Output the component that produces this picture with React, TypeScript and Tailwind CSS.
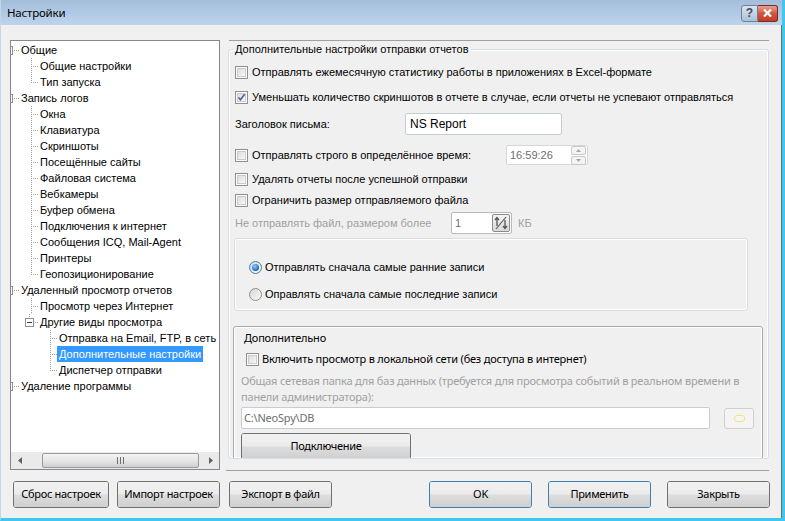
import React from "react";

type Row = {
  label: string;
  level: 0 | 1 | 2;
  last?: boolean;
  box?: boolean;
  selected?: boolean;
};

const rows: Row[] = [
  { label: "Общие", level: 0 },
  { label: "Общие настройки", level: 1 },
  { label: "Тип запуска", level: 1, last: true },
  { label: "Запись логов", level: 0 },
  { label: "Окна", level: 1 },
  { label: "Клавиатура", level: 1 },
  { label: "Скриншоты", level: 1 },
  { label: "Посещённые сайты", level: 1 },
  { label: "Файловая система", level: 1 },
  { label: "Вебкамеры", level: 1 },
  { label: "Буфер обмена", level: 1 },
  { label: "Подключения к интернет", level: 1 },
  { label: "Сообщения ICQ, Mail-Agent", level: 1 },
  { label: "Принтеры", level: 1 },
  { label: "Геопозиционирование", level: 1, last: true },
  { label: "Удаленный просмотр отчетов", level: 0 },
  { label: "Просмотр через Интернет", level: 1 },
  { label: "Другие виды просмотра", level: 1, last: true, box: true },
  { label: "Отправка на Email, FTP, в сеть", level: 2 },
  { label: "Дополнительные настройки", level: 2, selected: true },
  { label: "Диспетчер отправки", level: 2, last: true },
  { label: "Удаление программы", level: 0, last: true },
];

const gutterWidth = { 0: 8, 1: 27, 2: 46 };

function Connector({ row }: { row: Row }) {
  const w = gutterWidth[row.level];
  const dot = { stroke: "#a0a0a0", strokeDasharray: "1 1", shapeRendering: "crispEdges" as const };
  return (
    <svg width={w} height={16} className="shrink-0">
      {row.level === 0 && (
        <>
          <path d="M0 4.5H1.5V12.5H0" fill="none" stroke="#919191" shapeRendering="crispEdges" />
          <line x1={3} y1={8.5} x2={8} y2={8.5} {...dot} />
        </>
      )}
      {row.level === 1 && !row.box && (
        <>
          <line x1={20.5} y1={0} x2={20.5} y2={row.last ? 9 : 16} {...dot} />
          <line x1={22} y1={8.5} x2={27} y2={8.5} {...dot} />
        </>
      )}
      {row.level === 1 && row.box && (
        <>
          <line x1={18.5} y1={0} x2={18.5} y2={4} {...dot} />
          <rect x={14.5} y={4.5} width={8} height={8} fill="#fff" stroke="#919191" shapeRendering="crispEdges" />
          <line x1={16} y1={8.5} x2={21} y2={8.5} stroke="#3c3c3c" shapeRendering="crispEdges" />
          <line x1={24} y1={8.5} x2={27} y2={8.5} {...dot} />
          <line x1={39.5} y1={12} x2={39.5} y2={16} {...dot} />
        </>
      )}
      {row.level === 2 && (
        <>
          <line x1={39.5} y1={0} x2={39.5} y2={row.last ? 9 : 16} {...dot} />
          <line x1={41} y1={8.5} x2={46} y2={8.5} {...dot} />
        </>
      )}
    </svg>
  );
}

function TreeRow({ row }: { row: Row }) {
  return (
    <div className="flex h-[16px] items-center whitespace-nowrap">
      <Connector row={row} />
      <span
        className={
          "flex h-[16px] items-center px-[2px] " +
          (row.selected ? "bg-[#3399ff] text-white" : "text-black")
        }
      >
        {row.label}
      </span>
    </div>
  );
}

function HScrollbar() {
  return (
    <div className="flex h-[17px] items-center bg-[#eaeaea] px-[1px]">
      <div className="flex h-[15px] w-[15px] items-center justify-center">
        <svg width="4" height="7" viewBox="0 0 4 7">
          <path d="M4 0V7L0 3.5Z" fill="#606060" />
        </svg>
      </div>
      <div className="ml-[15px] flex h-[15px] w-[157px] items-center justify-center rounded-[2px] border border-[#9a9a9a] bg-gradient-to-b from-[#f3f3f3] via-[#e6e6e6] to-[#d0d0d0]">
        <svg width="8" height="7" viewBox="0 0 8 7">
          <path d="M0.5 0V7M3.5 0V7M6.5 0V7" stroke="#6e6e6e" strokeWidth="1" />
        </svg>
      </div>
      <div className="flex-1" />
      <div className="flex h-[15px] w-[15px] items-center justify-center">
        <svg width="4" height="7" viewBox="0 0 4 7">
          <path d="M0 0V7L4 3.5Z" fill="#606060" />
        </svg>
      </div>
    </div>
  );
}

function Checkbox({ checked, className = "" }: { checked?: boolean; className?: string }) {
  return (
    <div className={"flex h-[13px] w-[13px] shrink-0 items-center justify-center border border-[#8e8f8f] bg-white " + className}>
      <div className="relative h-[9px] w-[9px] border border-[#cbcbcb] bg-gradient-to-br from-[#dcdcdc] to-[#f9f9f9]">
        {checked && (
          <svg width="9" height="9" viewBox="0 0 9 9" className="absolute left-[-1px] top-[-1px]">
            <path d="M1.5 4.5L3.5 6.8L7.6 1.2" fill="none" stroke="#4a5f97" strokeWidth="1.6" />
          </svg>
        )}
      </div>
    </div>
  );
}

function Radio({ checked }: { checked?: boolean }) {
  return (
    <div
      className={
        "flex h-[13px] w-[13px] shrink-0 items-center justify-center rounded-full border bg-gradient-to-br from-[#d6d6d6] to-[#fafafa] " +
        (checked ? "border-[#3c7fb1]" : "border-[#8e8f8f]")
      }
    >
      {checked && (
        <div className="h-[7px] w-[7px] rounded-full bg-[radial-gradient(circle_at_40%_35%,#8ed0ff,#1d62b5_70%)]" />
      )}
    </div>
  );
}

function CheckRow({ label, checked }: { label: string; checked?: boolean }) {
  return (
    <div className="flex h-[13px] items-center gap-[4px] pl-[6px]">
      <Checkbox checked={checked} />
      <span>{label}</span>
    </div>
  );
}

function WinButton({
  label,
  width,
  primary,
}: {
  label: string;
  width: string;
  primary?: boolean;
}) {
  return (
    <div
      className={
        "flex h-[27px] items-center justify-center rounded-[3px] border " +
        width +
        (primary
          ? " border-[#3c7fb1] shadow-[inset_0_0_0_1px_#a6dff9]"
          : " border-[#707070] shadow-[inset_0_0_0_1px_#fbfbfb]")
      }
    >
      <div className="flex h-full w-full items-center justify-center rounded-[2px] bg-[linear-gradient(#f2f2f2_0%,#ebebeb_48%,#dddddd_52%,#cfcfcf_100%)] font-['Noto_Sans',sans-serif] text-[11px] tracking-[-0.3px] text-black">
        {label}
      </div>
    </div>
  );
}

function SpinDown() {
  return (
    <div className="flex h-[19px] w-[15px] flex-col gap-px">
      <div className="flex flex-1 items-center justify-center rounded-[2px] border border-[#c9c9c9] bg-[#f4f4f4]">
        <svg width="5" height="3" viewBox="0 0 5 3">
          <path d="M0 3L2.5 0L5 3Z" fill="#a9a9a9" />
        </svg>
      </div>
      <div className="flex flex-1 items-center justify-center rounded-[2px] border border-[#c9c9c9] bg-[#f4f4f4]">
        <svg width="5" height="3" viewBox="0 0 5 3">
          <path d="M0 0L2.5 3L5 0Z" fill="#a9a9a9" />
        </svg>
      </div>
    </div>
  );
}

export default function App() {
  return (
    <div className="relative h-[521px] w-[785px] overflow-hidden bg-[#f0f0f0] font-['Liberation_Sans',Arial,sans-serif] text-[11px] text-black">
      {/* window frame */}
      <div className="flex h-[521px] w-[785px] flex-col border-l border-[#c5d5e8] border-r-[3px] border-r-[#41c6ee] border-b-[3px] border-b-[#41c6ee]">
        {/* title bar */}
        <div className="flex h-[25px] shrink-0 items-center bg-gradient-to-b from-[#a3bddb] to-[#bdd4ec] pl-[6px] pr-[4px]">
          <span className="font-['Noto_Sans',sans-serif] text-[11.5px] tracking-[-0.2px] text-black">Настройки</span>
          <div className="flex-1" />
          <div className="mt-[1px] flex h-[17px]">
            <div className="flex w-[17px] items-center justify-center rounded-l-[3px] border border-[#6d7f9a] bg-gradient-to-b from-[#dbe5f1] to-[#aebfd6] text-[12px] font-bold text-[#3b4b63]">
              ?
            </div>
            <div className="flex w-[20px] items-center justify-center rounded-r-[3px] border border-l-0 border-[#7a2a20] bg-gradient-to-b from-[#e8a293] via-[#d1553f] to-[#c33d28]">
              <svg width="9" height="8" viewBox="0 0 9 8">
                <path d="M1 0.5L8 7.5M8 0.5L1 7.5" stroke="#fff" strokeWidth="2.2" />
              </svg>
            </div>
          </div>
        </div>

        {/* body */}
        <div className="flex flex-1 flex-col border-r border-[#6d6d6d] pl-[9px] pr-[12px]">
          <div className="mt-[15px] flex">
            {/* tree */}
            <div className="flex h-[430px] w-[210px] shrink-0 flex-col border border-[#828790] bg-white">
              <div className="flex-1 overflow-hidden pt-[1px]">
                {rows.map((r) => (
                  <TreeRow key={r.label} row={r} />
                ))}
              </div>
              <HScrollbar />
            </div>

            {/* right pane */}
            <div className="ml-[8px] flex w-[541px] flex-col">
              <div className="ml-[1px] h-px bg-[#a0a0a0]" />
              <fieldset className="mt-[2px] h-[416px] overflow-hidden rounded-[3px] border border-[#d5dfe5] shadow-[inset_0_0_0_1px_#fff]">
                <legend className="ml-[4px] px-[2px] text-[11px] leading-[13px] text-black">
                  Дополнительные настройки отправки отчетов
                </legend>
                <div className="flex flex-col pt-[10px]">
                  <CheckRow label="Отправлять ежемесячную статистику работы в приложениях в Excel-формате" />
                  <div className="h-[12px]" />
                  <CheckRow checked label="Уменьшать количество скриншотов в отчете в случае, если отчеты не успевают отправляться" />
                  <div className="mt-[9px] flex h-[22px] items-center">
                    <span className="w-[176px] pl-[6px]">Заголовок письма:</span>
                    <div className="flex h-[22px] w-[157px] items-center rounded-[2px] border border-[#c4ccd6] bg-white pl-[4px] text-[12px]">
                      NS Report
                    </div>
                  </div>
                  <div className="mt-[10px] flex h-[20px] items-center">
                    <div className="w-[277px]">
                      <CheckRow label="Отправлять строго в определённое время:" />
                    </div>
                    <div className="flex h-[20px] w-[82px] items-center rounded-[2px] border border-[#d7d7d7] bg-white pl-[3px] pr-[1px] text-[#6d6d6d]">
                      <span className="flex-1">16:59:26</span>
                      <SpinDown />
                    </div>
                  </div>
                  <div className="h-[8px]" />
                  <CheckRow label="Удалять отчеты после успешной отправки" />
                  <div className="h-[8px]" />
                  <CheckRow label="Ограничить размер отправляемого файла" />
                  <div className="mt-[5px] flex h-[22px] items-center text-[#a0a0a0]">
                    <span className="w-[222px] pl-[6px]">Не отправлять файл, размером более</span>
                    <div className="flex h-[22px] w-[61px] items-center rounded-[2px] border border-[#b9b9b9] bg-white pl-[3px] pr-[1px] text-[#6d6d6d]">
                      <span className="flex-1">1</span>
                      <div className="flex h-[18px] w-[18px] items-center justify-center rounded-[2px] border border-[#8c8c8c] bg-gradient-to-b from-[#f5f5f5] to-[#d8d8d8]">
                        <svg width="14" height="14" viewBox="0 0 14 14">
                          <path d="M3 10V2M1 4L3 1.5L5 4" fill="none" stroke="#555" strokeWidth="1.3" />
                          <path d="M11 4V12M9 10L11 12.5L13 10" fill="none" stroke="#555" strokeWidth="1.3" />
                          <path d="M2 13L12 1" stroke="#555" strokeWidth="1.1" />
                        </svg>
                      </div>
                    </div>
                    <span className="ml-[6px]">КБ</span>
                  </div>
                  {/* send order */}
                  <div className="ml-[5px] mt-[4px] flex h-[73px] w-[514px] flex-col rounded-[3px] border border-[#dcdcdc] shadow-[inset_0_0_0_1px_#fff]">
                    <div className="mt-[22px] flex h-[13px] items-center gap-[3px] pl-[14px]">
                      <Radio checked />
                      <span>Отправлять сначала самые ранние записи</span>
                    </div>
                    <div className="mt-[14px] flex h-[13px] items-center gap-[3px] pl-[14px]">
                      <Radio />
                      <span>Оправлять сначала самые последние записи</span>
                    </div>
                  </div>
                  {/* extra */}
                  <div className="ml-[4px] mt-[15px] h-[160px] w-[530px] rounded-[3px] border border-[#a9a9a9] shadow-[inset_0_0_0_1px_#fff] font-['Noto_Sans',sans-serif] text-[11px] tracking-[-0.2px]">
                    <div className="flex flex-col pl-[7px]">
                      <span className="mt-[3px] pl-[3px] leading-[15px]">Дополнительно</span>
                      <div className="mt-[7px] flex h-[14px] items-center gap-[3px] pl-[5px]">
                        <Checkbox />
                        <span>Включить просмотр в локальной сети (без доступа в интернет)</span>
                      </div>
                      <div className="mt-[7px] leading-[16px] text-[#a0a0a0]">
                        Общая сетевая папка для баз данных (требуется для просмотра событий в реальном времени в
                        <br />
                        панели администратора):
                      </div>
                      <div className="mt-[2px] flex items-center">
                        <div className="flex h-[22px] w-[469px] items-center rounded-[2px] border border-[#c4ccd6] bg-white pl-[2px] text-[#6d6d6d]">
                          C:\NeoSpy\DB
                        </div>
                        <div className="ml-[14px] flex h-[21px] w-[30px] items-center justify-center rounded-[3px] border border-[#cfcfcf] bg-[#f4f4f4]">
                          <div className="h-[7px] w-[11px] rounded-[3px] border border-[#f3e47a]" />
                        </div>
                      </div>
                      <div className="mt-[4px] w-[170px]">
                        <WinButton label="Подключение" width="w-[170px] h-[22px]" />
                      </div>
                    </div>
                  </div>
                </div>
              </fieldset>
              <div className="ml-[-2px] mt-[11px] h-px bg-[#a0a0a0]" />
            </div>
          </div>

          {/* buttons */}
          <div className="mt-[10px] flex">
            <div className="ml-[3px]">
              <WinButton label="Сброс настроек" width="w-[96px]" />
            </div>
            <div className="ml-[8px]">
              <WinButton label="Импорт настроек" width="w-[103px]" />
            </div>
            <div className="ml-[9px]">
              <WinButton label="Экспорт в файл" width="w-[103px]" />
            </div>
            <div className="ml-[97px]">
              <WinButton label="OK" width="w-[103px]" primary />
            </div>
            <div className="ml-[16px]">
              <WinButton label="Применить" width="w-[103px]" primary />
            </div>
            <div className="ml-[16px]">
              <WinButton label="Закрыть" width="w-[103px]" />
            </div>
          </div>
        </div>
      </div>
    </div>
  );
}
